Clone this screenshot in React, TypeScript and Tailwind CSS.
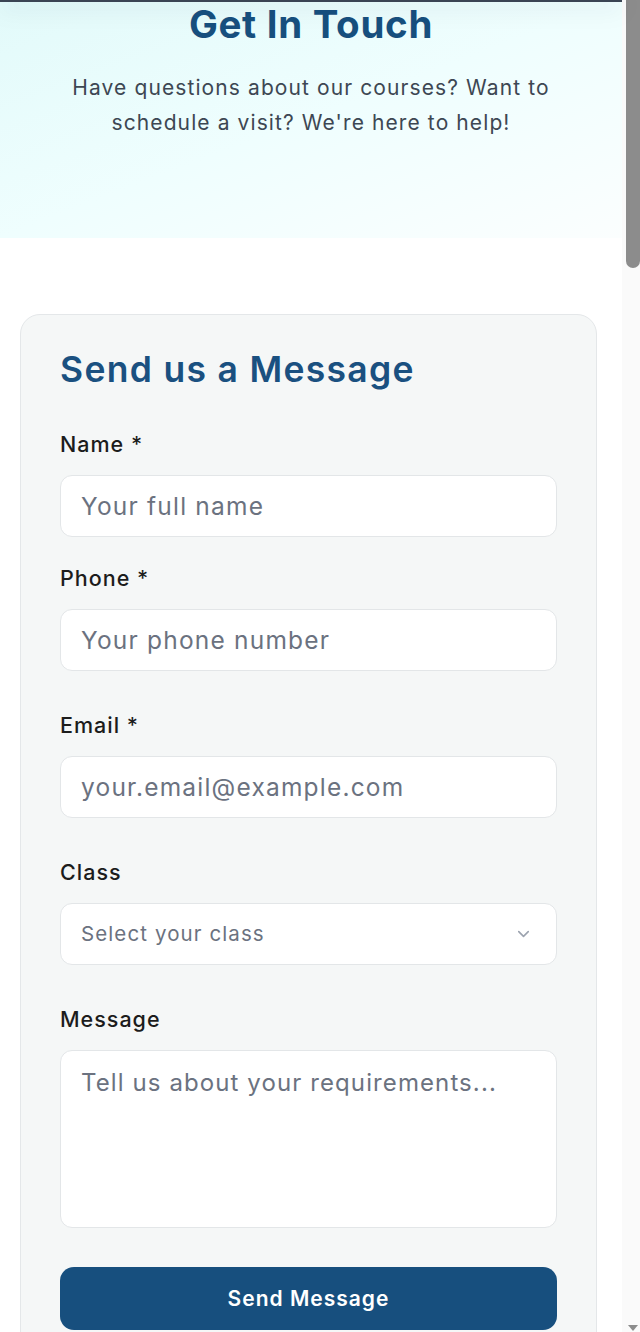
import React from "react";
import { ChevronDown } from "lucide-react";

const inputCls =
  "w-full h-[62px] bg-white border border-[#e3e6e8] rounded-xl px-5 text-[24.5px] tracking-[1.2px] text-gray-800 placeholder:text-[#6b7280] focus:outline-none";

function Field({ label, className = "", children }: { label: string; className?: string; children: React.ReactNode }) {
  return (
    <div className={className}>
      <label className="block text-[21.5px] leading-[28px] font-medium tracking-[1px] text-[#1c1c1c] mb-[17px]">{label}</label>
      {children}
    </div>
  );
}

export default function App() {
  return (
    <div className="flex h-[1332px] overflow-hidden bg-white font-['Inter','Noto_Sans',sans-serif]">
      <main className="relative flex-1 min-w-0">
        {/* fixed header edge */}
        <div className="absolute top-0 left-0 right-0 h-[2px] bg-[#3a4453] shadow-[0_4px_22px_rgba(30,41,59,0.35)]" />

        {/* Hero */}
        <section className="h-[238px] bg-gradient-to-br from-[#e2fafa] via-[#effefe] to-[#fbfefe] flex flex-col items-center pt-[2px]">
          <h1 className="text-[38.5px] leading-[44px] font-bold text-[#174f7e] tracking-[0.7px]">Get In Touch</h1>
          <p className="mt-[24px] max-w-[520px] text-center text-[21px] leading-[35px] tracking-[1.1px] text-[#3d4753]">
            Have questions about our courses? Want to schedule a visit? We're here to help!
          </p>
        </section>

        {/* Form card */}
        <div className="mt-[76px] ml-5 w-[577px] rounded-[20px] border border-[#e4e7e9] bg-[#f5f7f7] px-[39px] pt-[34px] pb-10">
          <h2 className="text-[35.5px] leading-[42px] font-semibold text-[#1a5080] tracking-[1.3px] mb-[39px]">Send us a Message</h2>

          <form onSubmit={(e) => e.preventDefault()}>
            <Field label="Name *">
              <input type="text" placeholder="Your full name" className={inputCls} />
            </Field>

            <Field label="Phone *" className="mt-[27px]">
              <input type="tel" placeholder="Your phone number" className={inputCls} />
            </Field>

            <Field label="Email *" className="mt-10">
              <input type="email" placeholder="your.email@example.com" className={inputCls} />
            </Field>

            <Field label="Class" className="mt-10">
              <div className="relative">
                <select
                  defaultValue=""
                  className="w-full h-[62px] appearance-none bg-white border border-[#e3e6e8] rounded-xl px-5 text-[20.5px] tracking-[1.1px] text-[#6b7280] focus:outline-none"
                >
                  <option value="" disabled>Select your class</option>
                  <option>Class 9</option>
                  <option>Class 10</option>
                  <option>Class 11</option>
                  <option>Class 12</option>
                </select>
                <ChevronDown className="absolute right-[24px] top-1/2 -translate-y-1/2 w-[19px] h-[19px] text-[#9ca3af] pointer-events-none" strokeWidth={2} />
              </div>
            </Field>

            <Field label="Message" className="mt-10">
              <textarea
                placeholder="Tell us about your requirements..."
                className="block w-full h-[178px] resize-none bg-white border border-[#e3e6e8] rounded-xl px-5 py-[14px] text-[24px] leading-[36px] tracking-[1.1px] text-gray-800 placeholder:text-[#6b7280] focus:outline-none"
              />
            </Field>

            <button
              type="submit"
              className="mt-[39px] w-full h-[63px] rounded-[14px] bg-[#174f7e] text-white text-[21px] font-semibold tracking-[1px]"
            >
              Send Message
            </button>
          </form>
        </div>
      </main>

      {/* scrollbar */}
      <aside className="w-[18px] bg-[#fafafa] flex flex-col items-end">
        <div className="w-[14px] h-[268px] rounded-b-[7px] bg-[#8c8c8c]" />
        <div className="flex-1" />
        <svg width="14" height="7" viewBox="0 0 14 7">
          <path d="M2 0 H12 L7 6 Z" fill="#8c8c8c" />
        </svg>
      </aside>
    </div>
  );
}
